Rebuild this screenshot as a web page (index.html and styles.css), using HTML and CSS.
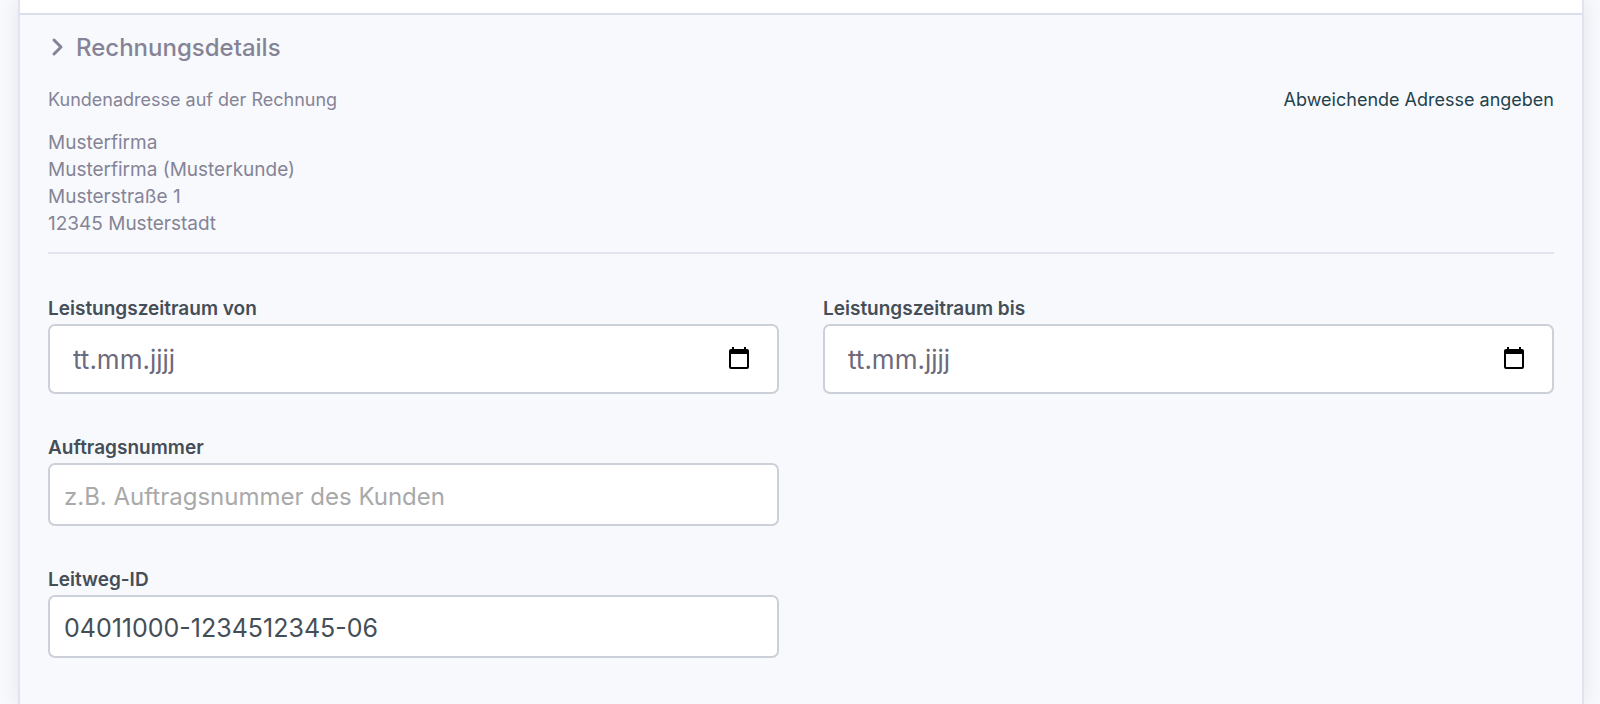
FILE: index.html
```html
<!DOCTYPE html>
<html lang="de">
<head>
    <meta charset="UTF-8">
    <meta name="viewport" content="width=device-width, initial-scale=1.0">
    <title>Rechnungsdetails</title>
    <link rel="stylesheet" href="styles.css">
</head>
<body>
    <main class="card">
        <div class="card-top"></div>
        <section class="details">
            <h2 class="details-title">
                <button type="button" class="toggle" aria-expanded="true">
                    <svg class="chevron" viewBox="0 0 18 18" aria-hidden="true">
                        <path d="M6 1l7 7-7 7" />
                    </svg>
                    Rechnungsdetails
                </button>
            </h2>

            <!-- Customer address -->
            <div class="address-head">
                <span>Kundenadresse auf der Rechnung</span>
                <a href="#">Abweichende Adresse angeben</a>
            </div>
            <address class="address">
                Musterfirma<br>
                Musterfirma (Musterkunde)<br>
                Musterstraße 1<br>
                12345 Musterstadt
            </address>

            <form class="form">
                <div class="field">
                    <label for="date-from">Leistungszeitraum von</label>
                    <div class="date-box">
                        <input type="text" id="date-from" placeholder="tt.mm.jjjj">
                        <button type="button" class="date-button" aria-label="Kalender öffnen">
                            <svg viewBox="0 0 20 22" aria-hidden="true">
                                <path fill-rule="evenodd" d="M3 0h2v2h10V0h2v2h1q2 0 2 2v16q0 2-2 2H2q-2 0-2-2V4q0-2 2-2h1zM2 7v13h16V7z" />
                            </svg>
                        </button>
                    </div>
                </div>
                <div class="field">
                    <label for="date-to">Leistungszeitraum bis</label>
                    <div class="date-box">
                        <input type="text" id="date-to" placeholder="tt.mm.jjjj">
                        <button type="button" class="date-button" aria-label="Kalender öffnen">
                            <svg viewBox="0 0 20 22" aria-hidden="true">
                                <path fill-rule="evenodd" d="M3 0h2v2h10V0h2v2h1q2 0 2 2v16q0 2-2 2H2q-2 0-2-2V4q0-2 2-2h1zM2 7v13h16V7z" />
                            </svg>
                        </button>
                    </div>
                </div>
                <div class="field field-left">
                    <label for="order-number">Auftragsnummer</label>
                    <input type="text" class="text-input" id="order-number" placeholder="z.B. Auftragsnummer des Kunden">
                </div>
                <div class="field field-left">
                    <label for="leitweg-id">Leitweg-ID</label>
                    <input type="text" class="text-input" id="leitweg-id" value="04011000-1234512345-06">
                </div>
            </form>
        </section>
    </main>
</body>
</html>
```
FILE: styles.css
```css
* {
    box-sizing: border-box;
}
body {
    margin: 0;
    padding: 0 16px 0 18px;
    background-color: #f8f9fd;
    color: #858496;
    font-family: Inter, "Liberation Sans", sans-serif;
    font-size: 18px;
    line-height: 27px;
}
.card {
    min-height: 100vh;
    border: solid #e2e3ee;
    border-width: 0 2px;
    background-color: #f8f9fd;
    box-shadow: 0 0 18px rgba(30, 30, 60, 0.09);
}
.card-top {
    height: 15px;
    background-color: white;
    border-bottom: 2px solid #dddeeb;
}
.details {
    padding: 18px 28px 44px;
}
.details-title {
    margin: 0 0 23px;
    font-size: 24px;
    line-height: 30px;
}
.toggle {
    display: flex;
    align-items: center;
    gap: 10px;
    padding: 0;
    border: none;
    background: none;
    color: inherit;
    font: inherit;
    font-weight: 500;
    cursor: pointer;
}
.chevron {
    width: 18px;
    height: 18px;
    fill: none;
    stroke: #858496;
    stroke-width: 3;
    stroke-linecap: round;
    stroke-linejoin: round;
    overflow: visible;
}
.address-head {
    display: flex;
    justify-content: space-between;
    margin-bottom: 16px;
}
.address-head a {
    color: #1f424c;
    text-decoration: none;
}
.address-head a:hover {
    text-decoration: underline;
}
.address {
    padding-bottom: 15px;
    border-bottom: 2px solid #e2e5ee;
    font-size: 19px;
    font-style: normal;
}
.form {
    display: grid;
    grid-template-columns: 1fr 1fr;
    gap: 41px 44px;
    padding-top: 42px;
}
.field {
    display: flex;
    flex-direction: column;
    gap: 3px;
}
.field-left {
    grid-column: 1;
}
.field label {
    color: #454e57;
    font-size: 19px;
    font-weight: 600;
    line-height: 25px;
}
.text-input,
.date-box {
    width: 100%;
    border: 2px solid #cbd0d9;
    border-radius: 7px;
    background-color: white;
}
.text-input {
    height: 63px;
    padding: 2px 14px 0;
    color: #454e57;
    font-family: inherit;
    font-size: 25px;
}
.text-input::placeholder {
    color: #a9a9a9;
    font-size: 24px;
    opacity: 1;
}
.date-box {
    display: flex;
    align-items: center;
    height: 70px;
    padding: 0 28px 0 23px;
}
.date-box input {
    flex: 1;
    min-width: 0;
    padding: 0;
    border: none;
    outline: none;
    background: none;
    color: #6c6a7c;
    font-family: inherit;
    font-size: 26px;
}
.date-box input::placeholder {
    color: #6c6a7c;
    opacity: 1;
}
.date-button {
    display: flex;
    padding: 0 0 3px;
    border: none;
    background: none;
    cursor: pointer;
}
.date-button svg {
    width: 20px;
    height: 22px;
    fill: black;
}
```
